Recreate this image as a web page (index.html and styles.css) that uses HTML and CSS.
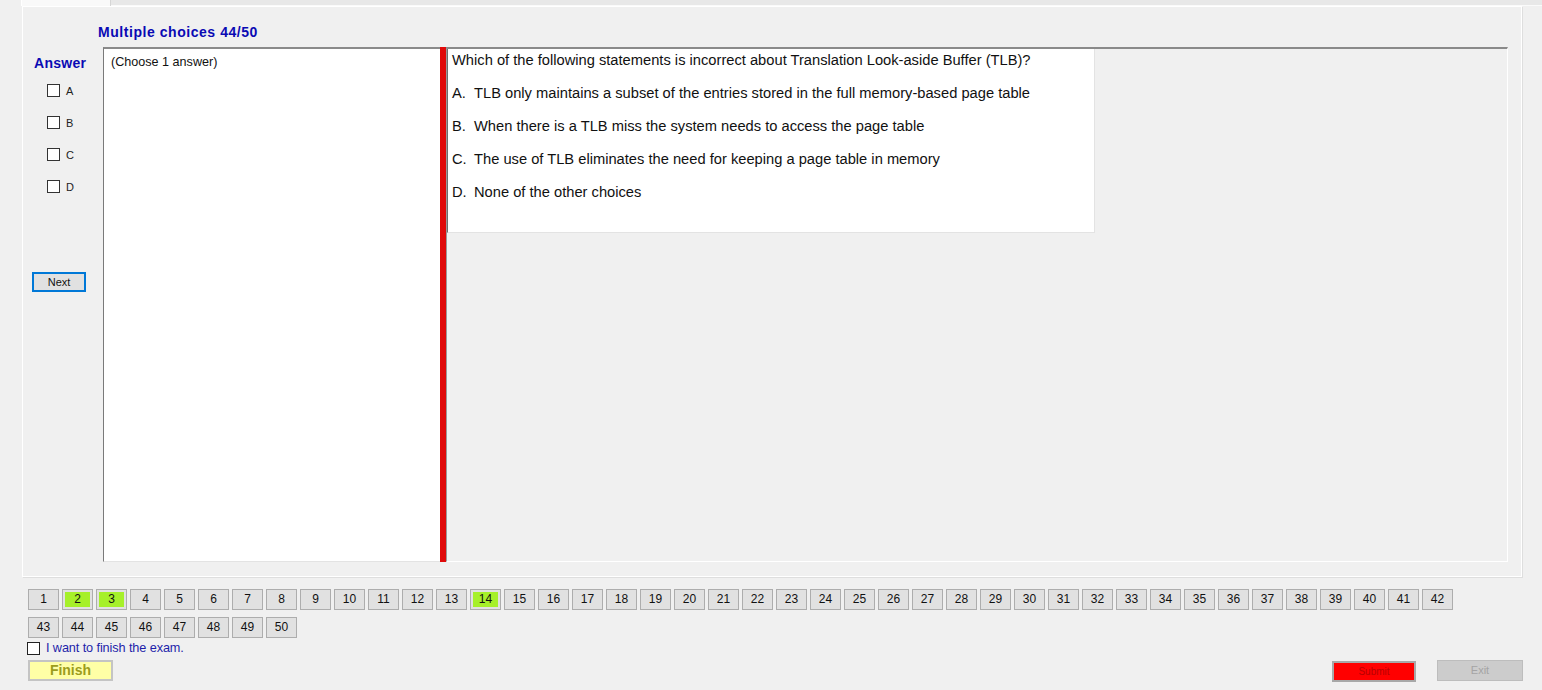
FILE: index.html
```html
<!DOCTYPE html>
<html>
<head>
<meta charset="utf-8">
<link rel="stylesheet" href="styles.css">
</head>
<body>
<div class="tabstrip"><div class="tab"></div><div class="tabrest"></div></div>
<div class="tabpage">
  <div class="title">Multiple choices 44/50</div>
  <div class="main">
    <div class="answer-col">
      <div class="answer-label">Answer</div>
      <div class="opts">
        <label class="opt"><span class="cb"></span><span>A</span></label>
        <label class="opt"><span class="cb"></span><span>B</span></label>
        <label class="opt"><span class="cb"></span><span>C</span></label>
        <label class="opt"><span class="cb"></span><span>D</span></label>
      </div>
      <div class="next">Next</div>
    </div>
    <div class="choose">(Choose 1 answer)</div>
    <div class="redbar"></div>
    <div class="qpanel">
      <div class="qbox">
        <p class="line">Which of the following statements is incorrect about Translation Look-aside Buffer (TLB)?</p>
        <p class="line"><span class="key">A.</span>TLB only maintains a subset of the entries stored in the full memory-based page table</p>
        <p class="line"><span class="key">B.</span>When there is a TLB miss the system needs to access the page table</p>
        <p class="line"><span class="key">C.</span>The use of TLB eliminates the need for keeping a page table in memory</p>
        <p class="line"><span class="key">D.</span>None of the other choices</p>
      </div>
    </div>
  </div>
</div>
<div class="nav">
  <div class="qn">1</div><div class="qn done">2</div><div class="qn done">3</div><div class="qn">4</div><div class="qn">5</div><div class="qn">6</div><div class="qn">7</div><div class="qn">8</div><div class="qn">9</div><div class="qn">10</div>
  <div class="qn">11</div><div class="qn">12</div><div class="qn">13</div><div class="qn done">14</div><div class="qn">15</div><div class="qn">16</div><div class="qn">17</div><div class="qn">18</div><div class="qn">19</div><div class="qn">20</div>
  <div class="qn">21</div><div class="qn">22</div><div class="qn">23</div><div class="qn">24</div><div class="qn">25</div><div class="qn">26</div><div class="qn">27</div><div class="qn">28</div><div class="qn">29</div><div class="qn">30</div>
  <div class="qn">31</div><div class="qn">32</div><div class="qn">33</div><div class="qn">34</div><div class="qn">35</div><div class="qn">36</div><div class="qn">37</div><div class="qn">38</div><div class="qn">39</div><div class="qn">40</div>
  <div class="qn">41</div><div class="qn">42</div><div class="qn">43</div><div class="qn">44</div><div class="qn">45</div><div class="qn">46</div><div class="qn">47</div><div class="qn">48</div><div class="qn">49</div><div class="qn">50</div>
</div>
<label class="finish-check"><span class="cb2"></span><span>I want to finish the exam.</span></label>
<div class="footer">
  <div class="finish">Finish</div>
  <div class="right-actions">
    <div class="submit">Submit</div>
    <div class="exit">Exit</div>
  </div>
</div>
</body>
</html>
```
FILE: styles.css
```css
* { box-sizing: border-box; }
html, body { margin: 0; padding: 0; }
body {
  width: 1542px;
  height: 690px;
  overflow: hidden;
  background: #f0f0f0;
  font-family: "Liberation Sans", Arial, sans-serif;
  color: #000;
}
.tabstrip {
  display: flex;
  height: 6px;
}
.tab {
  margin-left: 21px;
  width: 90px;
  height: 6px;
  background: #f9f9f9;
  border-left: 1px solid #ffffff;
  border-right: 1px solid #d6d6d6;
}
.tabrest {
  flex: 1;
  background: #e8e8e8;
  border-bottom: 1px solid #fafafa;
}
.tabpage {
  margin-left: 22px;
  width: 1500px;
  height: 571px;
  border: 1px solid #ffffff;
  box-shadow: 1px 1px 0 #dedede;
  background: #f0f0f0;
  display: flex;
  flex-direction: column;
}
.title {
  height: 40px;
  padding-top: 17px;
  padding-left: 75px;
  line-height: 16px;
  font-size: 14px;
  letter-spacing: 0.55px;
  font-weight: bold;
  color: #0a0ab4;
}
.main {
  display: flex;
  height: 515px;
  margin-right: 13px;
}
.answer-col {
  width: 80px;
  display: flex;
  flex-direction: column;
}
.answer-label {
  padding-top: 8px;
  padding-left: 11px;
  line-height: 16px;
  font-size: 14px;
  letter-spacing: 0.3px;
  font-weight: bold;
  color: #0a0ab4;
}
.opts {
  margin-top: 13px;
  display: flex;
  flex-direction: column;
  gap: 19px;
}
.opt {
  display: flex;
  align-items: center;
  height: 13px;
  padding-left: 24px;
  font-size: 11px;
  color: #222;
}
.cb {
  width: 13px;
  height: 13px;
  border: 1px solid #333;
  background: #fff;
  margin-right: 6px;
}
.next {
  margin-top: 79px;
  margin-left: 9px;
  width: 54px;
  height: 20px;
  border: 2px solid #0078d7;
  background: #e1e1e1;
  font-size: 11px;
  line-height: 16px;
  text-align: center;
  color: #111;
}
.choose {
  width: 337px;
  background: #fff;
  border-top: 2px solid #8a8a8a;
  border-left: 1px solid #7a7a7a;
  border-bottom: 1px solid #e3e3e3;
  padding: 5px 0 0 7px;
  font-size: 12.6px;
  line-height: 16px;
  color: #111;
}
.redbar {
  width: 6px;
  background: #e00a0a;
}
.qpanel {
  flex: 1;
  border-top: 2px solid #8a8a8a;
  border-right: 1px solid #ffffff;
  border-bottom: 1px solid #ffffff;
  border-left: 1px solid #9a9a9a;
}
.qbox {
  width: 648px;
  background: #fff;
  border-left: 1px solid #6e6e6e;
  border-right: 1px solid #e3e3e3;
  border-bottom: 1px solid #e3e3e3;
  padding: 0 0 18px 4px;
}
.line {
  margin: 0 0 11px 0;
  height: 22px;
  line-height: 22px;
  font-size: 14.7px;
  white-space: nowrap;
  color: #111;
}
.key {
  display: inline-block;
  width: 22px;
}
.nav {
  margin: 12px 0 0 28px;
  width: 1430px;
  display: flex;
  flex-wrap: wrap;
  column-gap: 3px;
  row-gap: 7px;
}
.qn {
  width: 31px;
  height: 21px;
  border: 1px solid #adadad;
  background: #e1e1e1;
  font-size: 12px;
  line-height: 19px;
  text-align: center;
  color: #111;
}
.qn.done {
  background: #a6f02a;
  box-shadow: inset 0 0 0 2px #e1e1e1;
}
.finish-check {
  display: flex;
  align-items: center;
  margin: 3px 0 0 27px;
  height: 14px;
  font-size: 12.7px;
  letter-spacing: -0.1px;
  color: #1e1eaa;
}
.cb2 {
  width: 13px;
  height: 13px;
  border: 1px solid #222;
  background: #fff;
  margin-right: 6px;
}
.footer {
  display: flex;
  justify-content: space-between;
  align-items: flex-start;
  margin-top: 5px;
  padding: 0 19px 0 28px;
}
.finish {
  width: 85px;
  height: 21px;
  border: 2px solid #c4c4c4;
  background: #ffffa6;
  font-size: 14px;
  font-weight: bold;
  line-height: 17px;
  text-align: center;
  color: #9c9c1c;
}
.right-actions {
  display: flex;
  gap: 21px;
  align-items: flex-start;
}
.submit {
  margin-top: 1px;
  width: 84px;
  height: 21px;
  border: 2px solid #a8a8a8;
  background: #ff0000;
  font-size: 10px;
  line-height: 17px;
  text-align: center;
  color: #b80000;
}
.exit {
  width: 86px;
  height: 21px;
  border: 1px solid #bdbdbd;
  background: #cccccc;
  font-size: 11px;
  line-height: 19px;
  text-align: center;
  color: #a4a4a4;
}
```
